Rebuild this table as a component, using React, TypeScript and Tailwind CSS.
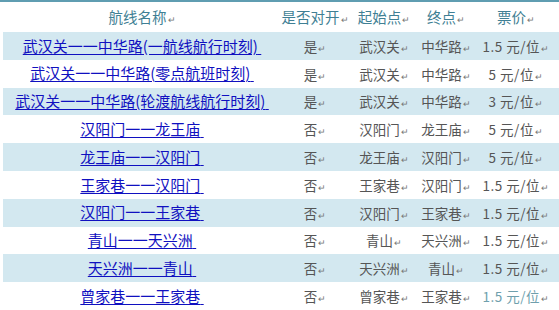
const routes = [
  { name: "武汉关一一中华路(一航线航行时刻)", both: "是", from: "武汉关", to: "中华路", price: "1.5 元/位" },
  { name: "武汉关一一中华路(零点航班时刻)", both: "是", from: "武汉关", to: "中华路", price: "5 元/位" },
  { name: "武汉关一一中华路(轮渡航线航行时刻)", both: "是", from: "武汉关", to: "中华路", price: "3 元/位" },
  { name: "汉阳门一一龙王庙", both: "否", from: "汉阳门", to: "龙王庙", price: "5 元/位" },
  { name: "龙王庙一一汉阳门", both: "否", from: "龙王庙", to: "汉阳门", price: "5 元/位" },
  { name: "王家巷一一汉阳门", both: "否", from: "王家巷", to: "汉阳门", price: "1.5 元/位" },
  { name: "汉阳门一一王家巷", both: "否", from: "汉阳门", to: "王家巷", price: "1.5 元/位" },
  { name: "青山一一天兴洲", both: "否", from: "青山", to: "天兴洲", price: "1.5 元/位" },
  { name: "天兴洲一一青山", both: "否", from: "天兴洲", to: "青山", price: "1.5 元/位" },
  { name: "曾家巷一一王家巷", both: "否", from: "曾家巷", to: "王家巷", price: "1.5 元/位" },
];

const cols = "grid grid-cols-[278px_68px_70px_54px_86px]";

function Mark() {
  return <span className="text-[9px] text-[#777] ml-[1px]">↵</span>;
}

export default function App() {
  return (
    <div
      className="w-[559px] h-[310px] overflow-hidden bg-white"
      style={{ fontFamily: '"Noto Sans CJK SC", "Noto Sans", sans-serif' }}
    >
      <div className="border-t-2 border-[#5f9db1]">
        <div
          className={`${cols} h-[30px] items-center text-[14.5px] text-[#3f7f94] pl-[3px] whitespace-nowrap`}
        >
          <div className="text-center">航线名称<Mark /></div>
          <div className="text-center">是否对开<Mark /></div>
          <div className="text-center">起始点<Mark /></div>
          <div className="text-center">终点<Mark /></div>
          <div className="text-center">票价<Mark /></div>
        </div>
        {routes.map((r, i) => (
          <div
            key={i}
            className={`${cols} h-[27.8px] items-center text-[13.5px] text-[#555] ml-[3px] whitespace-nowrap ${
              i % 2 === 0 ? "bg-[#d3e8f0]" : "bg-white"
            }`}
          >
            <div className="text-center text-[15px]">
              <span className="text-[#1010c0] underline underline-offset-2">
                {r.name}&nbsp;
              </span>
            </div>
            <div className="text-center">{r.both}<Mark /></div>
            <div className="text-center">{r.from}<Mark /></div>
            <div className="text-center">{r.to}<Mark /></div>
            <div className={`text-center tracking-[0.5px] ${i === 9 ? "text-[#6f9fad]" : ""}`}>
              {r.price}
              <Mark />
            </div>
          </div>
        ))}
      </div>
    </div>
  );
}
